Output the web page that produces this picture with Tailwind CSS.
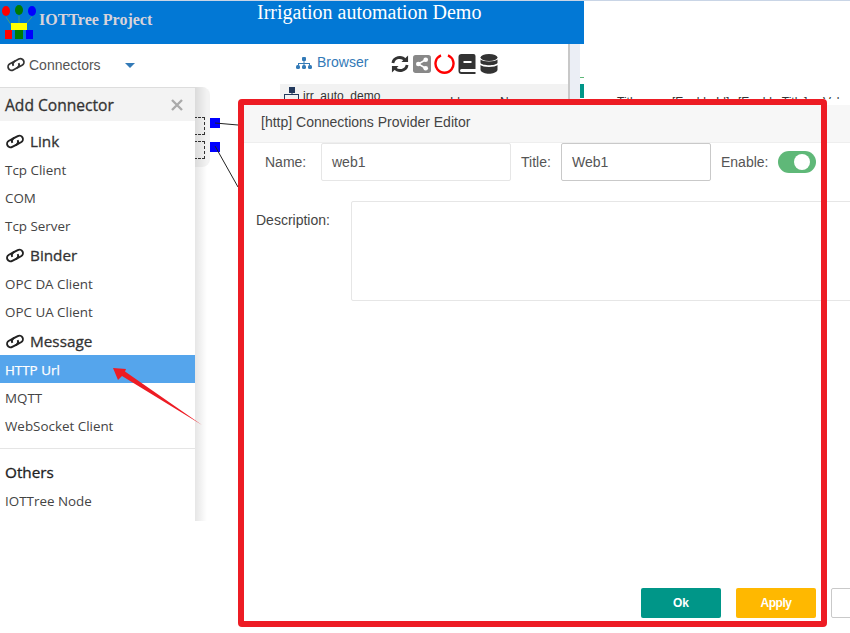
<!DOCTYPE html>
<html lang="en">
<head>
    <meta charset="UTF-8">
    <title>Irrigation automation Demo</title>
    <script src="https://cdn.jsdelivr.net/npm/@tailwindcss/browser@4"></script>
</head>
<body class="bg-white font-['Liberation_Sans',sans-serif]">
    <div class="relative w-[850px] h-[633px] overflow-hidden bg-white">
        <!-- Page behind the dialogs -->
        <div class="h-px bg-[#c9d5e6]"></div>
        <div class="flex">
            <div class="w-[584px] shrink-0">
                <header class="relative h-[43px] bg-[#0278d5]">
                    <svg class="absolute left-0 top-[3px]" width="38" height="36" viewBox="0 0 38 36">
                        <path d="M6 13 L12 22 M19 12 V22 M32 13 L24 22" stroke="#4a9a78" stroke-width="1" fill="none"/>
                        <ellipse cx="6" cy="7" rx="4" ry="5" fill="#f00"/>
                        <ellipse cx="19" cy="6" rx="4" ry="5" fill="#007a00"/>
                        <ellipse cx="32" cy="7" rx="4" ry="5" fill="#00f"/>
                        <rect x="11" y="19" width="16" height="7" fill="#ff0"/>
                        <rect x="5" y="26" width="7" height="9" fill="#f00"/>
                        <rect x="15" y="26" width="8" height="9" fill="#007a00"/>
                        <rect x="26" y="26" width="7" height="9" fill="#00f"/>
                    </svg>
                    <div class="absolute left-[39px] top-[9px] font-['Liberation_Serif',serif] font-bold text-[16px] leading-5 text-[#d8d3da]">IOTTree Project</div>
                    <div class="absolute left-[257px] top-[-1px] font-['Liberation_Serif',serif] text-[20px] leading-6 text-white">Irrigation automation Demo</div>
                </header>
                <div class="relative flex h-[40px] items-center">
                    <svg class="absolute left-[6px] top-[13px]" width="20" height="15" viewBox="0 0 20 14" fill="none" stroke="#333" stroke-width="1.8">
                        <g transform="rotate(-28 10 7)">
                            <path d="M11 3.5 H5 A3.5 3.5 0 0 0 5 10.5 H10 A3.5 3.5 0 0 0 13 7"/>
                            <path d="M9 10.5 H15 A3.5 3.5 0 0 0 15 3.5 H10 A3.5 3.5 0 0 0 7 7"/>
                        </g>
                    </svg>
                    <span class="absolute left-[29px] top-[13px] text-[14px] leading-4 text-[#555]">Connectors</span>
                    <span class="absolute left-[125px] top-[19px] h-0 w-0 border-x-[5px] border-x-transparent border-t-[5px] border-t-[#337ab7]"></span>
                    <svg class="absolute left-[296px] top-[12px]" width="16" height="14" viewBox="0 0 16 14" fill="#337ab7">
                        <rect x="6" y="1" width="4" height="4" rx="1"/>
                        <path d="M7.5 5h1v2H14v2h-1V8H8.5v1h-1V8H3v1H2V7h5.5z"/>
                        <rect x="0" y="9" width="4" height="4" rx="1.5"/>
                        <rect x="6" y="9" width="4" height="4" rx="1.5"/>
                        <rect x="12" y="9" width="4" height="4" rx="1.5"/>
                    </svg>
                    <span class="absolute left-[317px] top-[10px] text-[14px] leading-4 text-[#337ab7]">Browser</span>
                    <!-- toolbar icons -->
                    <div class="absolute left-[391px] top-[9px] flex items-center gap-[4px]">
                        <svg width="18" height="20" viewBox="0 0 19 20" fill="none" stroke="#333" stroke-width="3">
                            <path d="M2 9 C3 3 11 1 15 6"/>
                            <path d="M17 11 C16 17 8 19 4 14"/>
                            <path d="M18 1 V8 H11 Z" fill="#333" stroke="none"/>
                            <path d="M1 19 V12 H8 Z" fill="#333" stroke="none"/>
                        </svg>
                        <svg width="18" height="18" viewBox="0 0 17 17">
                            <rect width="17" height="17" rx="2.5" fill="#888"/>
                            <path d="M12 4.5 L5 8.5 L12 12.5" stroke="#fff" stroke-width="1.5" fill="none"/>
                            <circle cx="12" cy="4.5" r="2.2" fill="#fff"/>
                            <circle cx="5" cy="8.5" r="2.2" fill="#fff"/>
                            <circle cx="12" cy="12.5" r="2.2" fill="#fff"/>
                        </svg>
                        <svg class="-mx-[1px]" width="21" height="21" viewBox="0 0 21 21" fill="none" stroke="#f00" stroke-width="2.4">
                            <path d="M7 2.4 A9 9 0 1 0 14 2.4"/>
                        </svg>
                        <svg width="18" height="20" viewBox="0 0 17 20">
                            <path d="M3 0 H15 A2 2 0 0 1 17 2 V15 H3 A1.5 1.5 0 0 0 3 18 H17 V20 H3 A3 3 0 0 1 0 17 V3 A3 3 0 0 1 3 0Z" fill="#333"/>
                            <rect x="5" y="7" width="8" height="2" fill="#fff"/>
                        </svg>
                        <svg width="18" height="20" viewBox="0 0 17 20" fill="#333">
                            <ellipse cx="8.5" cy="3.5" rx="8.5" ry="3.5"/>
                            <path d="M0 5.5 C2 8 15 8 17 5.5 V9 C15 12 2 12 0 9Z"/>
                            <path d="M0 11 C2 13.5 15 13.5 17 11 V16 C15 21 2 21 0 16Z"/>
                        </svg>
                    </div>
                    <div class="absolute bottom-0 left-[568px] top-0 w-[2px] bg-[#c8c8c8]"></div>
                    <div class="absolute bottom-0 left-[570px] top-0 w-[10px] bg-[#ebeef5]"></div>
                </div>
            </div>
        </div>

        <!-- Tree strip, clipped by the editor dialog -->
        <div class="absolute left-[280px] top-[84px] h-[15px] w-[288px] bg-[#f2f2f2]">
            <svg class="absolute left-[3px] top-[3px]" width="17" height="12" viewBox="0 0 17 12" fill="#23395d">
                <rect x="6" y="0" width="6" height="6"/>
                <path d="M8.5 5h1v2H16v5h-1V8H2v4H1V7h7.5z"/>
            </svg>
            <span class="absolute left-[23px] top-[5px] text-[12px] leading-[14px] text-[#333]">irr_auto_demo</span>
        </div>
        <div class="absolute left-[568px] top-[84px] h-[15px] w-[2px] bg-[#c8c8c8]"></div>
        <div class="absolute left-[570px] top-[84px] h-[15px] w-[10px] bg-[#ebeef5]"></div>
        <div class="absolute left-[580px] top-[77px] h-px w-[4px] bg-[#5fb878]"></div>
        <div class="absolute left-[580px] top-[84px] h-[14px] w-[4px] bg-[#009688]"></div>
        <div class="absolute left-[450px] top-[96px] flex h-[3px] w-[400px] overflow-hidden text-[12px] leading-[12px] text-[#333]">
            <span class="w-[50px] shrink-0">Id</span>
            <span class="w-[117px] shrink-0">Name</span>
            <span class="w-[55px] shrink-0">Title</span>
            <span class="w-[66px] shrink-0">[Enable Id]</span>
            <span class="w-[85px] shrink-0">[Enable Title]</span>
            <span class="shrink-0">Value</span>
        </div>

        <!-- Bits of the diagram that show behind the panel -->
        <div class="absolute left-[195px] top-[87px] h-[80px] w-[15px] rounded-r-lg bg-[#f3f3f3]"></div>
        <div class="absolute left-[190px] top-[117px] h-[18px] w-[15px] border border-dashed border-[#333]"></div>
        <div class="absolute left-[190px] top-[141px] h-[18px] w-[15px] border border-dashed border-[#333]"></div>
        <div class="absolute left-[210px] top-[118px] h-[10px] w-[10px] bg-[#00f]"></div>
        <div class="absolute left-[210px] top-[142px] h-[10px] w-[10px] bg-[#00f]"></div>
        <svg class="absolute left-[210px] top-[118px]" width="30" height="72" viewBox="0 0 30 72" fill="none" stroke="#222" stroke-width="1">
            <path d="M5 5 L28 7"/>
            <path d="M5 28 L28 69"/>
        </svg>

        <!-- Add Connector panel -->
        <div class="absolute left-[195px] top-[87px] h-[434px] w-[12px] bg-gradient-to-r from-black/10 to-transparent"></div>
        <aside class="absolute left-0 top-[87px] h-[434px] w-[195px] bg-white font-['Open_Sans',sans-serif] text-[13.4px] text-[#444]">
            <div class="flex h-[34px] items-center justify-between border-t border-[#ddd] bg-[#f3f3f3] pl-[5px] pr-[12px]">
                <span class="pt-[2px] text-[15.6px] text-[#333] [-webkit-text-stroke:0.3px_#333]">Add Connector</span>
                <svg width="12" height="12" viewBox="0 0 12 12" stroke="#aaa" stroke-width="2.4"><path d="M1 1 L11 11 M11 1 L1 11"/></svg>
            </div>
            <h3 class="flex h-[41px] items-center gap-[5px] pl-[5px] text-[15.3px] font-normal text-[#333] [-webkit-text-stroke:0.3px_#333]">
                <svg width="20" height="15" viewBox="0 0 20 14" fill="none" stroke="#222" stroke-width="1.9"><g transform="rotate(-28 10 7)"><path d="M11 3.5 H5 A3.5 3.5 0 0 0 5 10.5 H10 A3.5 3.5 0 0 0 13 7"/><path d="M9 10.5 H15 A3.5 3.5 0 0 0 15 3.5 H10 A3.5 3.5 0 0 0 7 7"/></g></svg>
                Link
            </h3>
            <div class="-mt-[7px] flex h-[28px] items-center pl-[5px] pt-[2px]">Tcp Client</div>
            <div class="flex h-[28px] items-center pl-[5px] pt-[2px]">COM</div>
            <div class="flex h-[28px] items-center pl-[5px] pt-[2px]">Tcp Server</div>
            <h3 class="flex h-[30px] items-center gap-[5px] pl-[5px] pt-[2px] text-[15.3px] font-normal text-[#333] [-webkit-text-stroke:0.3px_#333]">
                <svg width="20" height="15" viewBox="0 0 20 14" fill="none" stroke="#222" stroke-width="1.9"><g transform="rotate(-28 10 7)"><path d="M11 3.5 H5 A3.5 3.5 0 0 0 5 10.5 H10 A3.5 3.5 0 0 0 13 7"/><path d="M9 10.5 H15 A3.5 3.5 0 0 0 15 3.5 H10 A3.5 3.5 0 0 0 7 7"/></g></svg>
                Binder
            </h3>
            <div class="flex h-[28px] items-center pl-[5px] pt-[2px]">OPC DA Client</div>
            <div class="flex h-[28px] items-center pl-[5px] pt-[2px]">OPC UA Client</div>
            <h3 class="flex h-[30px] items-center gap-[5px] pl-[5px] pt-[2px] text-[15.3px] font-normal text-[#333] [-webkit-text-stroke:0.3px_#333]">
                <svg width="20" height="15" viewBox="0 0 20 14" fill="none" stroke="#222" stroke-width="1.9"><g transform="rotate(-28 10 7)"><path d="M11 3.5 H5 A3.5 3.5 0 0 0 5 10.5 H10 A3.5 3.5 0 0 0 13 7"/><path d="M9 10.5 H15 A3.5 3.5 0 0 0 15 3.5 H10 A3.5 3.5 0 0 0 7 7"/></g></svg>
                Message
            </h3>
            <div class="flex h-[28px] items-center bg-[#55a5ec] pl-[5px] pt-[2px] text-white [-webkit-text-stroke:0.25px_#fff]">HTTP Url</div>
            <div class="flex h-[28px] items-center pl-[5px] pt-[2px]">MQTT</div>
            <div class="flex h-[28px] items-center pl-[5px] pt-[2px]">WebSocket Client</div>
            <div class="mt-[9px] h-px bg-[#e5e5e5]"></div>
            <h3 class="flex h-[47px] items-center pl-[5px] text-[15.3px] font-normal text-[#222] [-webkit-text-stroke:0.3px_#222]">Others</h3>
            <div class="-mt-[9px] flex h-[28px] items-center pl-[5px]">IOTTree Node</div>
        </aside>

        <!-- Connections Provider Editor -->
        <section class="absolute left-[244px] top-[105px] h-[516px] w-[640px] bg-white text-[14px] text-[#555]">
            <div class="flex h-[38px] items-center border-b border-[#eee] bg-[#f7f7f7] pb-[2px] pl-[17px] text-[#444]">[http] Connections Provider Editor</div>
            <div class="flex h-[58px]">
                <label class="w-[77px] pl-[21px] pt-[11px] leading-4">Name:</label>
                <div class="flex h-[38px] w-[190px] items-center rounded-[2px] border border-[#e6e6e6] pl-[10px]">web1</div>
                <label class="w-[50px] pl-[10px] pt-[11px] leading-4">Title:</label>
                <div class="flex h-[38px] w-[150px] items-center rounded-[2px] border border-[#c9c9c9] pl-[10px]">Web1</div>
                <label class="w-[67px] pl-[10px] pt-[11px] leading-4">Enable:</label>
                <div class="relative mt-[8px] h-[22px] w-[38px] rounded-full bg-[#5fb878]">
                    <span class="absolute right-[6px] top-[3px] h-4 w-4 rounded-full bg-white"></span>
                </div>
            </div>
            <div class="flex">
                <label class="w-[107px] pl-[12px] pt-[11px] leading-4 text-[#444]">Description:</label>
                <div class="h-[100px] flex-1 rounded-[2px] border border-[#e6e6e6]"></div>
            </div>
            <div class="absolute left-[397px] top-[483px] flex gap-[15px] text-[12px] font-bold text-white">
                <button class="h-[30px] w-[80px] rounded-[2px] bg-[#009688]">Ok</button>
                <button class="h-[30px] w-[80px] rounded-[2px] bg-[#ffb800] tracking-[-0.5px]">Apply</button>
                <button class="h-[30px] w-[80px] rounded-[2px] border border-[#c9c9c9] bg-white"></button>
            </div>
        </section>

        <!-- Red annotations drawn on the screenshot -->
        <div class="pointer-events-none absolute left-[238px] top-[99px] h-[528px] w-[589px] rounded-[4px] border-[6px] border-[#ed1c24]"></div>
        <svg class="pointer-events-none absolute left-0 top-0" width="850" height="633" viewBox="0 0 850 633">
            <polygon points="113,368 126,369 125,371.5 202,425 122,376 118,380" fill="#ed1c24"/>
        </svg>
    </div>
</body>
</html>
